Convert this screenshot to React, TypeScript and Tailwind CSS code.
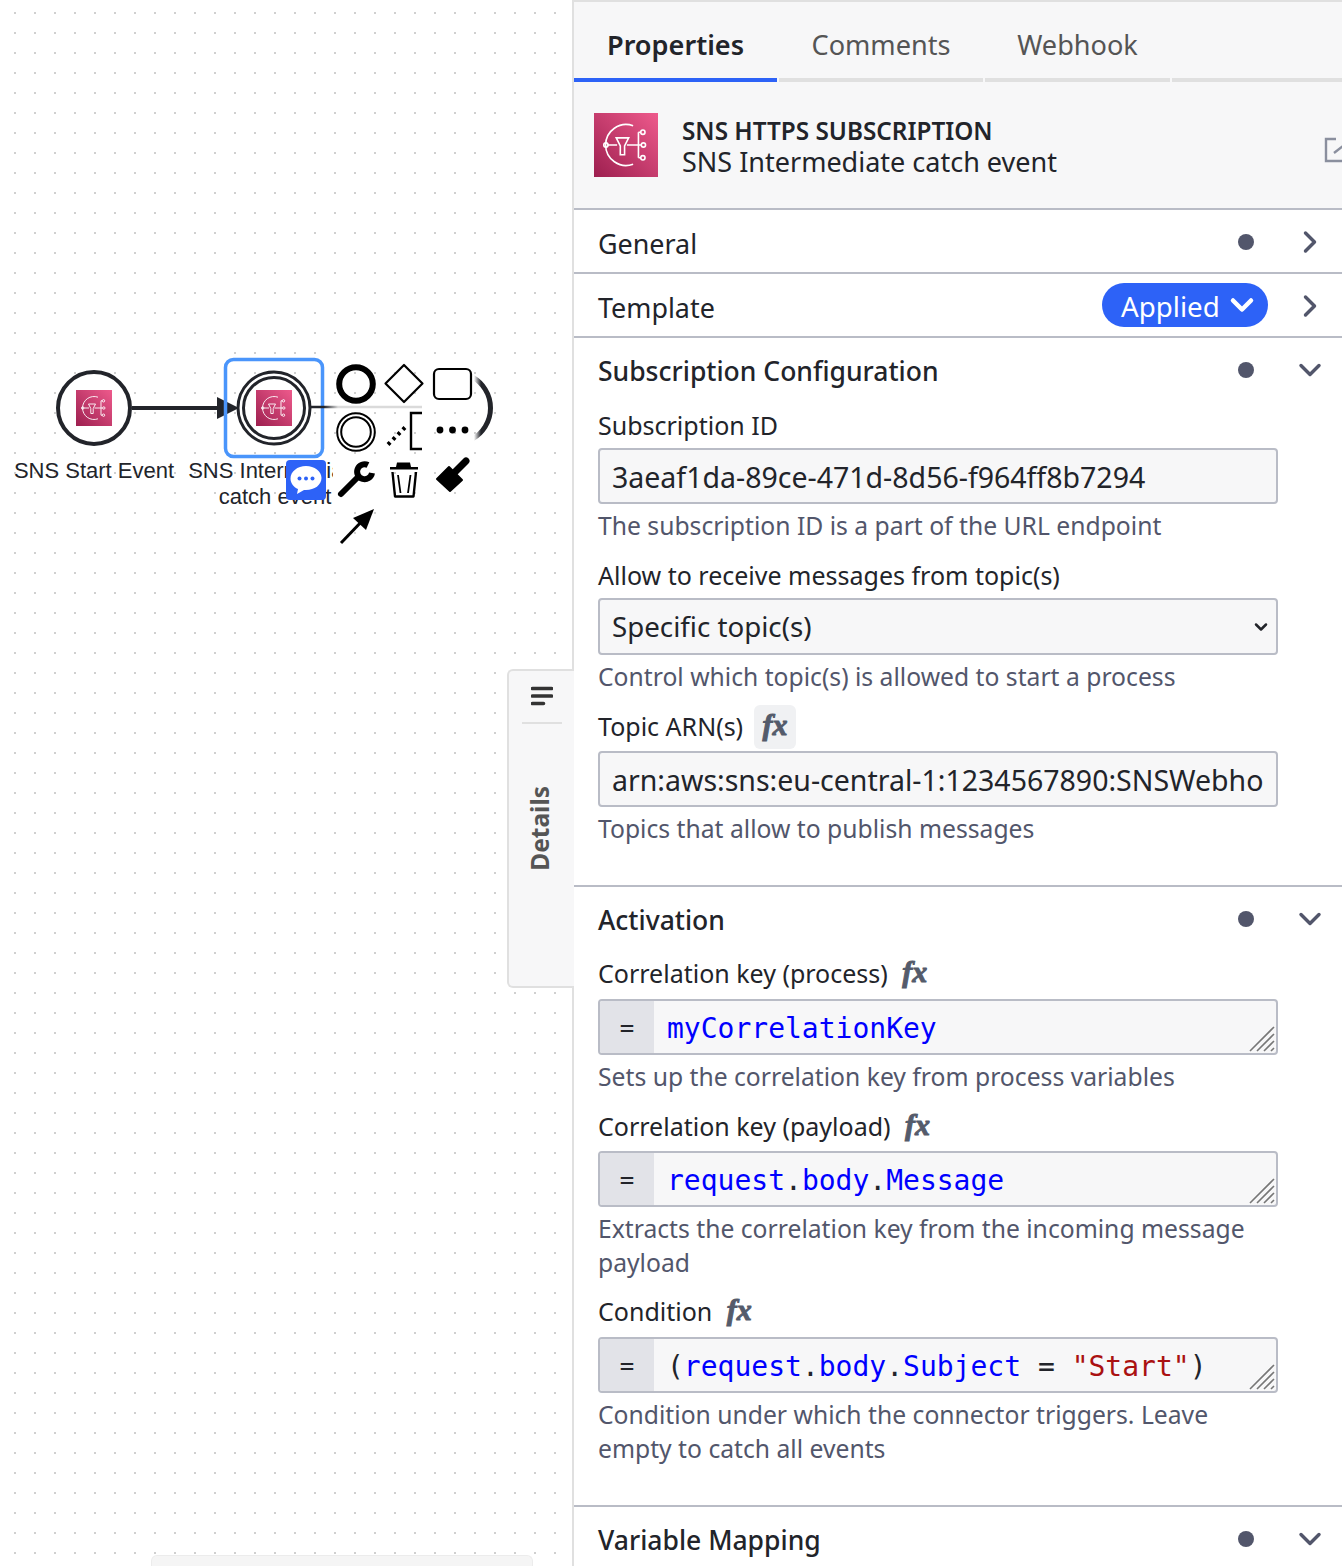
import React from 'react';
import { ChevronDown, ChevronRight } from 'lucide-react';

const SANS = 'font-["Noto_Sans",sans-serif]';

// AWS SNS glyph, drawn in a 36x36 box
const SnsGlyph = () => (
  <g fill="none" stroke="#fff" strokeWidth="0.9">
    <path d="M22 7.200a11.500 11.500 0 1 0 0 21.600" />
    <path d="M7.500 18h5.500M18.500 18h8M25 10.800v14.400M25 10.800h1M25 25.200h1" />
    <path d="M12.500 14h7l-2.300 4.500v5h-2.400v-5z" />
    <circle cx="6.700" cy="18" r="1.200" />
    <circle cx="27.500" cy="10.800" r="1.200" />
    <circle cx="27.800" cy="18" r="1.200" />
    <circle cx="27.500" cy="25.200" r="1.200" />
  </g>
);

const SnsIcon = ({ x, y, size = 36, id }: { x: number; y: number; size?: number; id: string }) => (
  <svg x={x} y={y} width={size} height={size} viewBox="0 0 36 36">
    <defs>
      <linearGradient id={id} x1="0" y1="1" x2="1" y2="0">
        <stop offset="0" stopColor="#9d1f4f" />
        <stop offset="1" stopColor="#ee5a8c" />
      </linearGradient>
    </defs>
    <rect width="36" height="36" fill={`url(#${id})`} />
    <SnsGlyph />
  </svg>
);

const Diagram = () => (
  <svg className="absolute left-0 top-0" width="572" height="600" fontFamily="'Liberation Sans', Arial, sans-serif">
    <defs>
      <linearGradient id="fadeArc" gradientUnits="userSpaceOnUse" x1="474" y1="0" x2="481" y2="0">
        <stop offset="0" stopColor="#fff" />
        <stop offset="1" stopColor="#22242a" />
      </linearGradient>
      <linearGradient id="fadeLine" gradientUnits="userSpaceOnUse" x1="324" y1="0" x2="338" y2="0">
        <stop offset="0" stopColor="#22242a" />
        <stop offset="1" stopColor="#dadada" />
      </linearGradient>
    </defs>

    {/* start event */}
    <circle cx="94" cy="408" r="36" fill="#fff" stroke="#22242a" strokeWidth="4" />
    <SnsIcon x={76} y={390} id="snsA" />
    <path d="M132 408H220" stroke="#22242a" strokeWidth="4" />
    <path d="M217 397L239 408L217 419Z" fill="#22242a" />
    <text x="94" y="478" textAnchor="middle" fontSize="22" fill="#22242a">SNS Start Event</text>

    {/* selected intermediate event */}
    <rect x="225.500" y="359.500" width="97" height="97" rx="8" fill="none" stroke="#4a95fb" strokeWidth="3.500" />
    <circle cx="274" cy="408" r="36" fill="#fff" stroke="#22242a" strokeWidth="3" />
    <circle cx="274" cy="408" r="30.500" fill="#fff" stroke="#22242a" strokeWidth="3" />
    <SnsIcon x={256} y={390} id="snsB" />
    <text x="275" y="478" textAnchor="middle" fontSize="22" fill="#22242a">SNS Intermediate</text>
    <text x="275" y="504" textAnchor="middle" fontSize="22" fill="#22242a">catch event</text>

    {/* context pad sits on white over the flow */}
    <rect x="333" y="458" width="60" height="54" fill="#fff" />
    <path d="M310 407H422" stroke="url(#fadeLine)" strokeWidth="2.500" />
    <path d="M473 377.400A35.500 35.500 0 0 1 473 438.600" fill="none" stroke="url(#fadeArc)" strokeWidth="5" />

    <circle cx="356" cy="384" r="16.800" fill="none" stroke="#000" strokeWidth="6" />
    <path d="M404 365L422.500 383.500L404 402L385.500 383.500Z" fill="none" stroke="#000" strokeWidth="2.200" strokeLinejoin="round" />
    <rect x="434" y="369" width="37" height="30" rx="5" fill="#fff" stroke="#000" strokeWidth="2.200" />
    <circle cx="356" cy="432" r="18.800" fill="#fff" stroke="#000" strokeWidth="2" />
    <circle cx="356" cy="432" r="14.800" fill="#fff" stroke="#000" strokeWidth="2" />
    <path d="M388 444.500L406 426.500" stroke="#000" strokeWidth="4" strokeDasharray="3 4" />
    <path d="M422 413H411V449H422" fill="none" stroke="#000" strokeWidth="2.400" />
    <circle cx="440" cy="430" r="3.400" />
    <circle cx="452.500" cy="430" r="3.400" />
    <circle cx="465" cy="430" r="3.400" />

    {/* wrench */}
    <path d="M341 494L357 478" stroke="#000" strokeWidth="6" strokeLinecap="round" />
    <path d="M368 465A7.500 7.500 0 1 0 372 473" fill="none" stroke="#000" strokeWidth="6" />
    {/* trash */}
    <path d="M397 462.500h13l1 4.500h7v2.500h-28V467h6z" />
    <path d="M392.500 472L395 496.500H413.500L416 472" fill="none" stroke="#000" strokeWidth="2.400" strokeLinejoin="round" />
    <path d="M398 475l2.500 18M410.500 475l-2.500 18" stroke="#000" strokeWidth="1.800" />
    {/* brush */}
    <path d="M437 479L449 467L462 480L450 491Z" stroke="#000" strokeWidth="2" strokeLinejoin="round" />
    <path d="M453 474L466 461" stroke="#000" strokeWidth="7" strokeLinecap="round" />
    {/* connect arrow */}
    <path d="M341 543L364 519" stroke="#000" strokeWidth="3" />
    <path d="M374 509L366 530L353 518Z" />
  </svg>
);

const CommentBadge = () => (
  <div className="absolute left-[286px] top-[460px] flex h-10 w-10 items-center justify-center rounded bg-[#2d62f7]">
    <svg width="32" height="30" viewBox="0 0 32 30">
      <path d="M16 1C7.500 1 .500 6.500 .500 13.500c0 4.500 3 8.500 7.500 10.500l-1 5 7-4h2c8.500 0 15.500-5 15.500-12S24.500 1 16 1z" fill="#fff" />
      <circle cx="9.500" cy="13.500" r="2" fill="#2d62f7" />
      <circle cx="16" cy="13.500" r="2" fill="#2d62f7" />
      <circle cx="22.500" cy="13.500" r="2" fill="#2d62f7" />
    </svg>
  </div>
);

const DetailsTab = () => (
  <div className="absolute left-[507px] top-[669px] flex h-[319px] w-[67px] flex-col items-center rounded-l-md border-2 border-r-0 border-[#e0e0e0] bg-[#f7f7f8]">
    <svg className="mt-[15px]" width="22" height="20" viewBox="0 0 22 20">
      <path d="M1.500 2.500h19M1.500 10h19M1.500 17.500h11" stroke="#333" strokeWidth="3.600" strokeLinecap="round" />
    </svg>
    <div className="mt-[16px] h-[2px] w-10 bg-[#e0e0e0]" />
    <div className="mt-[62px] -ml-[2px] flex h-[84px] w-8 items-center justify-center">
      <span className={`-rotate-90 whitespace-nowrap text-[24.500px] font-bold text-[#555] ${SANS}`}>Details</span>
    </div>
  </div>
);

const Fx = ({ boxed }: { boxed?: boolean }) => (
  <span
    className={`flex h-[44px] w-[42px] items-center justify-center rounded-md pb-1 font-["Liberation_Serif",serif] text-[30px] font-bold italic leading-none text-[#545b6b] [-webkit-text-stroke:1px_#545b6b] ${
      boxed ? 'bg-[#f0f1f3]' : ''
    }`}
  >
    fx
  </span>
);

const Label = ({ text, fx, boxed, gap }: { text: string; fx?: boolean; boxed?: boolean; gap: string }) => (
  <div className={`flex h-[34px] items-center text-[25px] ${gap}`}>
    <span className="text-[#22242a]">{text}</span>
    {fx && (
      <span className={boxed ? 'ml-[11px]' : 'ml-[6px]'}>
        <Fx boxed={boxed} />
      </span>
    )}
  </div>
);

const Hint = ({ children }: { children: React.ReactNode }) => (
  <p className="mt-[5px] w-[680px] text-[24.700px] leading-[34px] text-[#52566b]">{children}</p>
);

const TextBox = ({ value }: { value: string }) => (
  <div className="flex h-14 w-[680px] items-center rounded border-2 border-[#b9bcc6] bg-[#f7f7f8] pl-3 pr-3 text-[28.500px] text-[#22242a]">
    <div className="min-w-0 flex-1 overflow-hidden whitespace-nowrap pt-[2px]">{value}</div>
  </div>
);

const CodeBox = ({ children }: { children: React.ReactNode }) => (
  <div className="relative flex h-14 w-[680px] items-stretch overflow-hidden rounded border-2 border-[#b9bcc6] bg-[#f7f7f8]">
    <div className="flex w-[54px] items-center justify-center bg-[#e2e3e8] pt-[2px] font-['DejaVu_Sans_Mono',monospace] text-[24px] text-[#22242a]">=</div>
    <div className="flex items-center whitespace-pre pl-[13px] pt-1 font-['DejaVu_Sans_Mono',monospace] text-[28px] text-[#22242a]">{children}</div>
    <svg className="absolute bottom-[1px] right-[1px]" width="26" height="26" viewBox="0 0 26 26">
      <path d="M1 25L25 1M8 25L25 8M15 25L25 15M22 25L25 22" stroke="#777" strokeWidth="1.600" />
    </svg>
  </div>
);

const SectionHeader = ({ title, open, dot = true, bold, children }: { title: string; open?: boolean; dot?: boolean; bold?: boolean; children?: React.ReactNode }) => (
  <div className="flex h-[62px] items-center pl-6 pr-[20px]">
    <span className={`flex-1 pt-[6px] text-[#22242a] ${bold ? 'text-[26.500px] font-medium' : 'text-[26.900px]'}`}>{title}</span>
    {children}
    {dot && <span className="mt-0.5 h-4 w-4 rounded-full bg-[#52566b]" />}
    <span className="ml-[44px] mt-0.5 flex w-6 justify-center text-[#52566b]">
      {open ? <ChevronDown size={36} strokeWidth={2.300} className="shrink-0" /> : <ChevronRight size={36} strokeWidth={2.300} className="shrink-0" />}
    </span>
  </div>
);

const blue = 'text-[#0000ff]';

export default function App() {
  return (
    <div className={`relative flex h-[1566px] w-[1342px] overflow-hidden bg-white text-[26px] ${SANS}`}>
      <div className="relative w-[572px] shrink-0 bg-[radial-gradient(circle,#d0d0d0_1px,transparent_1.500px)] bg-[position:5px_3px] bg-[size:20px_20px]">
        <Diagram />
        <CommentBadge />
        <div className="absolute bottom-0 left-[151px] h-[11px] w-[382px] rounded-t-md border border-b-0 border-[#ececec] bg-[#f5f5f5]" />
      </div>
      <DetailsTab />

      <div className="flex min-w-0 flex-1 flex-col border-l-2 border-[#e0e0e0]">
        <div className="border-t-2 border-[#e0e0e0] bg-[#f7f7f8]">
          <div className="flex h-[80px] gap-[2px] text-[27.100px] text-[#555]">
            <div className="flex w-[203px] items-center justify-center border-b-4 border-[#2d62f7] pt-[10px] font-semibold text-[#22242a]">Properties</div>
            <div className="flex w-[204px] items-center justify-center border-b-4 border-[#e0e0e0] pt-[10px]">Comments</div>
            <div className="flex w-[185px] items-center justify-center border-b-4 border-[#e0e0e0] pt-[10px]">Webhook</div>
            <div className="flex-1 border-b-4 border-[#e0e0e0]" />
          </div>
          <div className="flex h-[126px] items-center pl-5">
            <svg width="64" height="64" className="shrink-0">
              <SnsIcon x={0} y={0} size={64} id="snsC" />
            </svg>
            <div className="ml-6 flex-1 text-[#22242a]">
              <div className="pt-[2px] text-[24.300px] font-semibold leading-[31px]">SNS HTTPS SUBSCRIPTION</div>
              <div className="text-[27px] leading-[31px]">SNS Intermediate catch event</div>
            </div>
            <svg className="-mr-[14px] mt-[10px] shrink-0" width="32" height="26" viewBox="0 0 32 26" fill="none" stroke="#8a8f9e" strokeWidth="2.400">
              <path d="M12 2H2V24H24" />
              <path d="M10 16L28 2M20 2H30" />
            </svg>
          </div>
        </div>

        <div className="border-t-2 border-[#b9bcc6]">
          <SectionHeader title="General" />
        </div>
        <div className="border-t-2 border-[#b9bcc6]">
          <SectionHeader title="Template" dot={false}>
            <span className="-mr-[14px] flex h-[44px] w-[166px] items-center gap-1 rounded-full bg-[#2d62f7] pl-[19px] text-[27.700px] text-white">
              <span className="pt-[3px]">Applied</span>
              <ChevronDown size={36} strokeWidth={3} className="shrink-0" />
            </span>
          </SectionHeader>
        </div>

        <div className="border-t-2 border-[#b9bcc6] pb-[39px]">
          <SectionHeader title="Subscription Configuration" open bold />
          <div className="pl-6">
            <div className="mt-[9px]">
              <Label text="Subscription ID" gap="mb-[5px]" />
              <TextBox value="3aeaf1da-89ce-471d-8d56-f964ff8b7294" />
              <Hint>The subscription ID is a part of the URL endpoint</Hint>
            </div>
            <div className="mt-4">
              <Label text="Allow to receive messages from topic(s)" gap="mb-[5px]" />
              <div className="relative w-[680px]">
                <select className="block h-[57px] w-full appearance-none rounded border-2 border-[#b9bcc6] bg-[#f7f7f8] pl-3 text-[27.700px] text-[#22242a]" defaultValue="specific">
                  <option value="specific">Specific topic(s)</option>
                </select>
                <ChevronDown size={20} strokeWidth={3} className="pointer-events-none absolute right-[7px] top-[19px] text-[#22242a]" />
              </div>
              <Hint>Control which topic(s) is allowed to start a process</Hint>
            </div>
            <div className="mt-4">
              <Label text="Topic ARN(s)" fx boxed gap="mb-[7px]" />
              <TextBox value="arn:aws:sns:eu-central-1:1234567890:SNSWebhook" />
              <Hint>Topics that allow to publish messages</Hint>
            </div>
          </div>
        </div>

        <div className="border-t-2 border-[#b9bcc6] pb-[39px]">
          <SectionHeader title="Activation" open bold />
          <div className="pl-6">
            <div className="mt-2">
              <Label text="Correlation key (process)" fx gap="mb-2" />
              <CodeBox>
                <span className={blue}>myCorrelationKey</span>
              </CodeBox>
              <Hint>Sets up the correlation key from process variables</Hint>
            </div>
            <div className="mt-4">
              <Label text="Correlation key (payload)" fx gap="mb-[7px]" />
              <CodeBox>
                <span className={blue}>request</span>.<span className={blue}>body</span>.<span className={blue}>Message</span>
              </CodeBox>
              <Hint>Extracts the correlation key from the incoming message payload</Hint>
            </div>
            <div className="mt-[15px]">
              <Label text="Condition" fx gap="mb-2" />
              <CodeBox>
                (<span className={blue}>request</span>.<span className={blue}>body</span>.<span className={blue}>Subject</span> = <span className="text-[#aa1111]">"Start"</span>)
              </CodeBox>
              <Hint>Condition under which the connector triggers. Leave empty to catch all events</Hint>
            </div>
          </div>
        </div>

        <div className="border-t-2 border-[#b9bcc6]">
          <SectionHeader title="Variable Mapping" open bold />
        </div>
      </div>
    </div>
  );
}
